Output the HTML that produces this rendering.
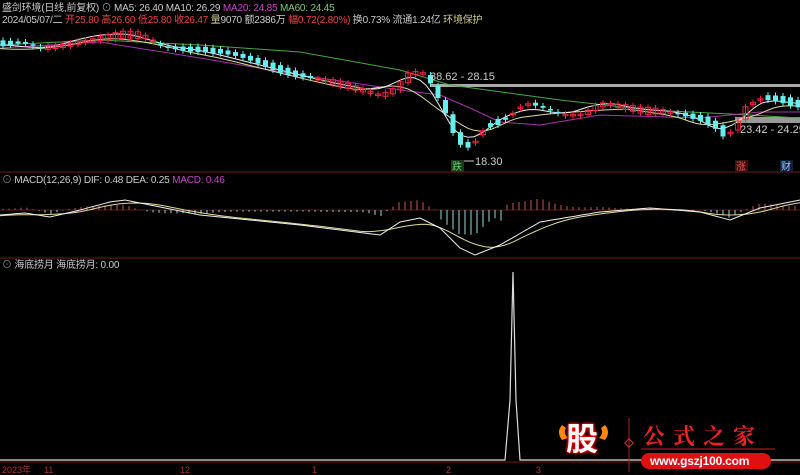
<!DOCTYPE html>
<html><head><meta charset="utf-8"><style>
html,body{margin:0;padding:0;background:#000;width:800px;height:475px;overflow:hidden;font-family:"Liberation Sans","Noto Sans CJK SC",sans-serif}
.t{position:absolute;font-size:10px;white-space:nowrap;line-height:12px;letter-spacing:-0.2px}
</style></head><body>
<svg id="s" width="800" height="475" style="position:absolute;left:0;top:0">
<line x1="0" y1="172" x2="800" y2="172" stroke="#6a1a1a"/>
<line x1="0" y1="258" x2="800" y2="258" stroke="#6a1a1a"/>
<line x1="0" y1="462" x2="800" y2="462" stroke="#6a1a1a"/>
<line x1="0" y1="210" x2="800" y2="210" stroke="#5a1a1a"/>
<rect x="430" y="84" width="370" height="3" fill="#aaa"/>
<rect x="735" y="117" width="65" height="6" fill="#999"/>
<g id="g"></g>
<polyline points="0,460 505,460 510,400 513,272 516,400 520,460 800,460" fill="none" stroke="#ddd" stroke-width="1.2"/>
<g font-size="9" fill="#a33" font-family="Liberation Sans,Noto Sans CJK SC,sans-serif">
<text x="2" y="473">2023年</text><text x="44" y="473">11</text><text x="180" y="473">12</text><text x="312" y="473">1</text><text x="446" y="473">2</text><text x="536" y="473">3</text>
</g>
<g font-size="11" fill="#ccc" font-family="Liberation Sans,sans-serif">
<text x="430" y="80">38.62 - 28.15</text><text x="740" y="133">23.42 - 24.29</text><text x="475" y="165">18.30</text></g>
<line x1="462" y1="161" x2="474" y2="161" stroke="#ccc"/>
<rect x="451" y="160" width="13" height="12" fill="#1a3a1a"/><text x="452" y="170" font-size="10" fill="#6c6" font-family="Noto Sans CJK SC,sans-serif">跌</text>
<rect x="735" y="160" width="13" height="12" fill="#3a1010"/><text x="736" y="170" font-size="10" fill="#e55" font-family="Noto Sans CJK SC,sans-serif">涨</text>
<rect x="780" y="160" width="13" height="12" fill="#10203a"/><text x="781" y="170" font-size="10" fill="#9cf" font-family="Noto Sans CJK SC,sans-serif">财</text>
<path d="M562 425 Q556 432 562 440 L568 438 Q563 433 566 428Z M605 425 Q611 432 605 440 L599 438 Q604 433 601 428Z" fill="#f80"/>
<line x1="629" y1="418" x2="629" y2="472" stroke="#a22"/>
<rect x="626" y="440" width="6" height="6" transform="rotate(45 629 443)" fill="none" stroke="#c33"/>
<rect x="641" y="453" width="130" height="16" rx="8" fill="#e01010"/>
<line x1="641" y1="449" x2="775" y2="449" stroke="#c22"/>
</svg>
<div class="t" style="left:2px;top:3px;color:#ccc">盛剑环境(日线,前复权) <span style="color:#999">⊙</span> MA5: 26.40 <span>MA10: 26.29</span> <span style="color:#c4c">MA20: 24.85</span> <span style="color:#7c7">MA60: 24.45</span></div>
<div class="t" style="left:2px;top:15px;color:#ccc">2024/05/07/二 <span style="color:#e44">开25.80 高26.60 低25.80 收26.47</span> <span style="color:#cc8">量</span>9070 额2386万 <span style="color:#e44">幅0.72(2.80%)</span> 换0.73% 流通1.24亿 <span style="color:#cc8">环境保护</span></div>
<div class="t" style="left:2px;top:175px;color:#ccc"><span style="color:#888">⊙</span> MACD(12,26,9) DIF: 0.48 DEA: 0.25 <span style="color:#c4c">MACD: 0.46</span></div>
<div class="t" style="left:2px;top:260px;color:#ccc"><span style="color:#888">⊙</span> 海底捞月 海底捞月: 0.00</div>
<div class="t" style="left:566px;top:421px;font-size:32px;line-height:36px;color:#fff;font-weight:bold;text-shadow:0 0 3px #f00,0 0 3px #f00,0 0 2px #f00">股</div>
<div class="t" style="left:643px;top:424px;font-size:22px;line-height:24px;color:#e22;letter-spacing:8px;font-family:'Noto Serif CJK SC',serif;font-weight:bold">公式之家</div>
<div class="t" style="left:650px;top:455px;font-size:12px;color:#fff;font-weight:bold">www.gszj100.com</div>
<script>
var P=[[0,45],[20,45],[40,50],[60,45],[80,38],[100,35],[120,33],[140,35],[160,45],[200,50],[240,60],[280,70],[320,80],[360,88],[380,92],[395,85],[410,70],[425,75],[435,95],[445,115],[455,140],[465,150],[475,140],[485,125],[500,122],[510,115],[525,105],[540,110],[560,115],[580,112],[600,100],[620,105],[640,110],[660,110],[680,112],[700,118],[715,128],[725,140],[735,130],[745,110],[760,100],[780,100],[800,105]];
function f(A,x){for(var i=1;i<A.length;i++)if(x<=A[i][0]){var a=A[i-1],b=A[i];return a[1]+(b[1]-a[1])*(x-a[0])/(b[0]-a[0]);}return A[A.length-1][1];}
var s='';
function pl(A,c){return '<polyline fill="none" stroke="'+c+'" stroke-width="1" points="'+A.map(function(p){return p[0]+','+p[1].toFixed(1)}).join(' ')+'"/>';}
var G=[[0,45],[100,40],[200,45],[300,52],[400,70],[450,85],[560,100],[650,110],[750,115],[800,118]];
var M=[[0,48],[100,42],[200,58],[300,75],[400,90],[440,95],[470,108],[500,122],[540,125],[600,115],[700,118],[760,112],[800,112]];
var Y=[];for(var x=0;x<=800;x+=6){var v=0;for(var k=-3;k<=3;k++)v+=f(P,x+k*6);Y.push([x,v/7]);}
var W=[];for(var x=0;x<=800;x+=6){var v=0;for(var k=-6;k<=6;k++)v+=f(P,x+k*6);W.push([x,v/13+3]);}
s+=pl(G,'#4a4')+pl(M,'#a3a')+pl(W,'#dd9')+pl(Y,'#eee');
for(var x=3;x<800;x+=7.5){var c=f(P,x)+Math.sin(x*0.9)*3,o=f(P,x-7.5)+Math.sin(x*1.7)*5;var up=c<o;var t=Math.min(c,o),h=Math.max(Math.abs(c-o),1.5);
var col=up?'#e24':'#6ee';s+='<line x1="'+x+'" x2="'+x+'" y1="'+(t-3)+'" y2="'+(t+h+3)+'" stroke="'+col+'"/>';
s+='<rect x="'+(x-2.5)+'" y="'+t+'" width="5" height="'+h+'" '+(up?'fill="none" stroke="#e24"':'fill="#6ee"')+'/>';}
var D=[[0,215],[25,213],[50,217],[80,210],[110,202],[125,200],[150,205],[200,215],[300,225],[380,235],[400,222],[420,218],[440,228],[460,248],[475,255],[500,245],[540,222],[600,212],[650,208],[700,212],[730,220],[760,208],[800,200]];
var dea=[];for(var x=0;x<=800;x+=5){var v=0;for(var k=-6;k<=6;k++)v+=f(D,x+k*5-10);dea.push([x,v/13]);}
var dif=[];for(var x=0;x<=800;x+=5)dif.push([x,f(D,x)]);
for(var x=3;x<800;x+=6){var h=(f(dea,x)-f(D,x))*1.6;if(x>440&&x<505)h=-Math.abs(h)-8;h=Math.max(-30,Math.min(25,h));var col=h>0?'#c55':'#9dd';s+='<line x1="'+x+'" x2="'+x+'" y1="210" y2="'+(210-h)+'" stroke="'+col+'"/>';}
s+=pl(dea,'#dd9')+pl(dif,'#eee');
document.getElementById('g').innerHTML=s;
</script>
</body></html>
